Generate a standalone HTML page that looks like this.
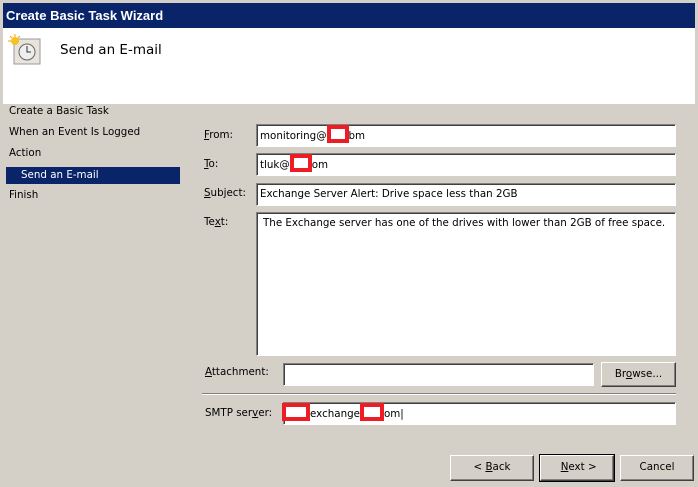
<!DOCTYPE html><html><head><style>
body{margin:0;width:698px;height:487px;background:#d4d0c8;position:relative;overflow:hidden;font-family:"DejaVu Sans","Liberation Sans",sans-serif;font-size:10.3px;color:#000}
.a{position:absolute}
.box{position:absolute;background:#fff;border-top:1px solid #808080;border-left:1px solid #808080;border-right:1px solid #fff;border-bottom:1px solid #fff;box-shadow:inset 1px 1px 0 #404040;box-sizing:border-box;padding:4px 0 0 3px;white-space:nowrap}
.btn{position:absolute;box-sizing:border-box;border:1px solid;border-color:#fff #404040 #404040 #fff;box-shadow:inset -1px -1px 0 #808080;text-align:center;line-height:23px}
.red{display:inline-block;background:#fff;border:4px solid #ee1c24;height:10px;vertical-align:middle;box-sizing:content-box;margin-top:-4px}
u{text-decoration:underline}
</style></head><body>
<div class="a" style="left:3px;top:3px;width:692px;height:25px;background:#0a246a;color:#fff;font-weight:bold;font-size:13px;line-height:25px;padding-left:3px;box-sizing:border-box;font-family:'Liberation Sans',sans-serif">Create Basic Task Wizard</div>
<div class="a" style="left:3px;top:28px;width:692px;height:76px;background:#fff"></div>
<svg class="a" style="left:8px;top:34px" width="34" height="32"><rect x="6" y="5" width="26" height="25" fill="#e8e4dc" stroke="#9a9a9a"/><circle cx="19" cy="18" r="8" fill="#eee" stroke="#666"/><path d="M19 12v6h4" stroke="#333" fill="none"/><circle cx="7" cy="7" r="4" fill="#f8c020"/><path d="M7 0v3M0 7h3M2 2l2 2M12 2l-2 2" stroke="#f0a000"/></svg>
<div class="a" style="left:60px;top:42px;font-size:13.5px">Send an E-mail</div>
<div class="a" style="left:9px;top:105px">Create a Basic Task</div>
<div class="a" style="left:9px;top:126px">When an Event Is Logged</div>
<div class="a" style="left:9px;top:147px">Action</div>
<div class="a" style="left:6px;top:167px;width:174px;height:17px;background:#0a246a;color:#fff;padding-left:15px;box-sizing:border-box;line-height:16px">Send an E-mail</div>
<div class="a" style="left:9px;top:189px">Finish</div>
<div class="a" style="left:204px;top:129px"><u>F</u>rom:</div>
<div class="a" style="left:204px;top:158px"><u>T</u>o:</div>
<div class="a" style="left:204px;top:187px"><u>S</u>ubject:</div>
<div class="a" style="left:204px;top:216px">Te<u>x</u>t:</div>
<div class="box" style="left:256px;top:124px;width:420px;height:23px">monitoring@<span class="red" style="width:14px"></span>bm</div>
<div class="box" style="left:256px;top:153px;width:420px;height:23px">tluk@<span class="red" style="width:14px"></span>om</div>
<div class="box" style="left:256px;top:183px;width:420px;height:23px">Exchange Server Alert: Drive space less than 2GB</div>
<div class="box" style="left:256px;top:212px;width:420px;height:144px;padding:4px 0 0 6px">The Exchange server has one of the drives with lower than 2GB of free space.</div>
<div class="a" style="left:205px;top:366px"><u>A</u>ttachment:</div>
<div class="box" style="left:283px;top:363px;width:311px;height:23px"></div>
<div class="btn" style="left:601px;top:362px;width:75px;height:25px">Br<u>o</u>wse...</div>
<div class="a" style="left:202px;top:393px;width:474px;height:1px;background:#808080;border-bottom:1px solid #fff"></div>
<div class="a" style="left:205px;top:407px">SMTP ser<u>v</u>er:</div>
<div class="box" style="left:283px;top:402px;width:393px;height:23px;padding-left:0"><span class="red" style="width:20px;margin-left:-2px"></span>exchange<span class="red" style="width:16px"></span>om|</div>
<div class="btn" style="left:450px;top:455px;width:84px;height:26px">&lt; <u>B</u>ack</div>
<div class="btn" style="left:540px;top:455px;width:74px;height:26px;outline:1px solid #000">&nbsp;<u>N</u>ext &gt;</div>
<div class="btn" style="left:620px;top:455px;width:74px;height:26px">Cancel</div>
</body></html>
